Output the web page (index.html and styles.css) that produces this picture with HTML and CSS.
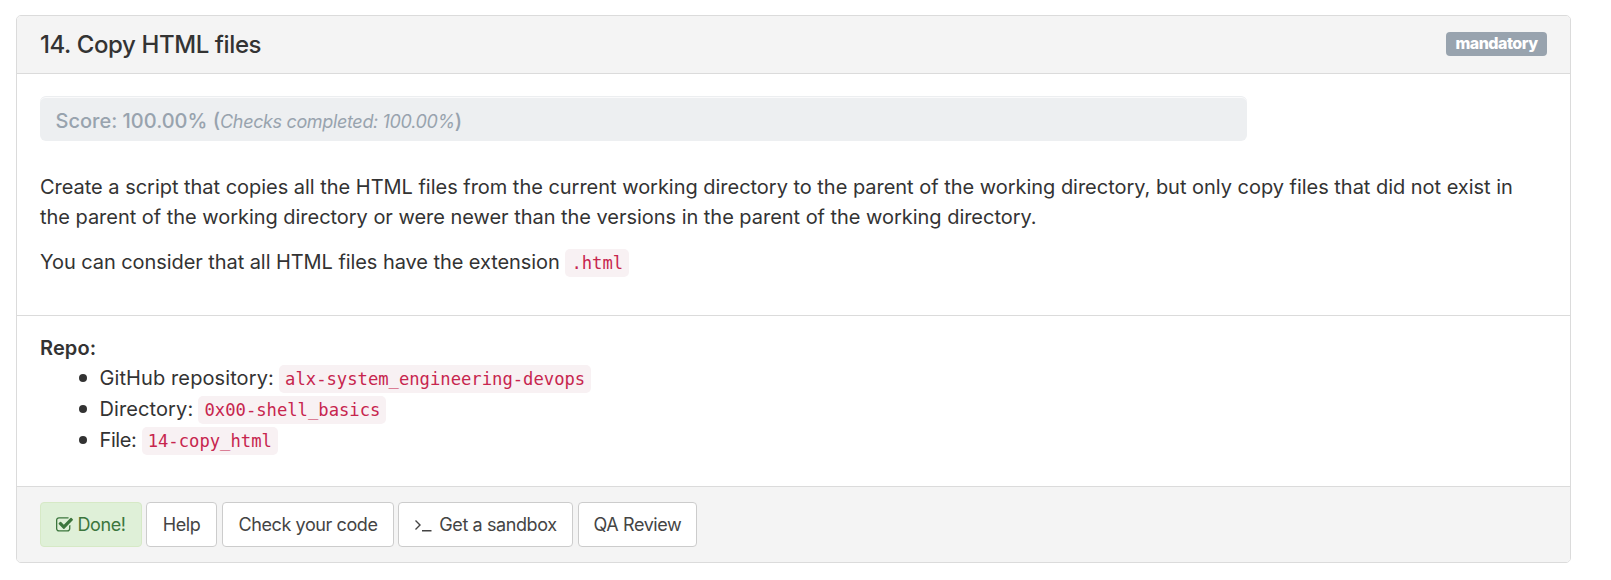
FILE: index.html
```html
<!DOCTYPE html>
<html lang="en">
<head>
<meta charset="utf-8">
<title>14. Copy HTML files</title>
<link rel="stylesheet" href="styles.css">
</head>
<body>
<section class="panel">
  <header class="panel-heading">
    <h3 class="panel-title">14. Copy HTML files</h3>
    <span class="label">mandatory</span>
  </header>
  <div class="panel-body">
    <div class="score"><span class="score-value">Score: 100.00% (</span><em class="checks">Checks completed: 100.00%</em>)</div>
    <p class="text"><span class="line-a">Create a script that copies all the HTML files from the current working directory to the parent of the working directory, but only copy files that did not exist in</span><br><span class="line-b">the parent of the working directory or were newer than the versions in the parent of the working directory.</span></p>
    <p class="text"><span class="line-c">You can consider that all HTML files have the extension</span> <code class="code">.html</code></p>
  </div>
  <div class="repo">
    <strong class="repo-title">Repo:</strong>
    <ul class="repo-list">
      <li class="repo-item"><span class="key-repo">GitHub repository:</span> <code class="code">alx-system_engineering-devops</code></li>
      <li class="repo-item"><span class="key-dir">Directory:</span> <code class="code">0x00-shell_basics</code></li>
      <li class="repo-item"><span class="key-file">File:</span> <code class="code">14-copy_html</code></li>
    </ul>
  </div>
  <footer class="panel-footer">
    <button class="btn btn-done"><svg class="icon-check" viewBox="0 0 1664 1536"><path fill="currentColor" d="M1408 802v318q0 119-84.500 203.500T1120 1408H288q-119 0-203.500-84.500T0 1120V288Q0 169 84.500 84.500T288 0h832q63 0 117 25 15 7 18 23 3 17-9 29l-49 49q-10 10-23 10-3 0-9-2-23-6-45-6H288q-66 0-113 47t-47 113v832q0 66 47 113t113 47h832q66 0 113-47t47-113V866q0-13 9-22l64-64q10-10 23-10 6 0 12 3 20 8 20 29zm231-489l-814 814q-24 24-57 24t-57-24L281 697q-24-24-24-57t24-57l110-110q24-24 57-24t57 24l263 263 647-647q24-24 57-24t57 24l110 110q24 24 24 57t-24 57z"/></svg><span>Done!</span></button>
    <button class="btn btn-help">Help</button>
    <button class="btn btn-check">Check your code</button>
    <button class="btn btn-sandbox"><svg class="icon-terminal" viewBox="0 0 18 14"><path d="M1.500 2.500 6 7 1.500 11.500M8 12.800h9.500" fill="none" stroke="currentColor" stroke-width="1.400"/></svg><span>Get a sandbox</span></button>
    <button class="btn btn-review">QA Review</button>
  </footer>
</section>
</body>
</html>
```
FILE: styles.css
```css
* { box-sizing: border-box; }
body {
  margin: 0;
  padding: 15px 40px 0 16px;
  background: #fff;
  color: #333;
  font: 20px/30px Inter, sans-serif;
}
.panel {
  width: 1555px;
  height: 548px;
  border: 1px solid #dbdbdb;
  border-radius: 5px;
  overflow: hidden;
}
.panel-heading {
  height: 58px;
  padding: 0 23px;
  display: flex;
  align-items: flex-start;
  justify-content: space-between;
  background: #f4f4f4;
  border-bottom: 1px solid #dbdbdb;
}
.panel-title {
  margin: 14px 0 0;
  font-size: 24px;
  line-height: 30px;
  font-weight: 450;
  letter-spacing: -0.4px;
  white-space: nowrap;
}
.label {
  width: 101px;
  height: 24px;
  margin-top: 16px;
  border-radius: 4px;
  background: #98a3ae;
  color: #fff;
  font-size: 16px;
  line-height: 22px;
  font-weight: 800;
  letter-spacing: -0.5px;
  text-align: center;
}
.panel-body {
  height: 242px;
  padding: 22px 23px 0;
  border-bottom: 1px solid #dbdbdb;
}
.score {
  width: 1207px;
  height: 45px;
  padding: 9px 15.5px 0;
  margin-bottom: 31px;
  border-radius: 6px;
  border-top: 1px solid #eceef0;
  background: #edeff1;
  box-shadow: inset 0 1px 0 #fafafb;
  color: #98a3ae;
  line-height: 30px;
  font-weight: 450;
  white-space: nowrap;
}
.score-value { letter-spacing: 0; }
.checks { font-size: 18px; font-weight: 400; letter-spacing: -0.35px; }
.text { margin: 0 0 15px; white-space: nowrap; }
.line-a { letter-spacing: -0.026px; }
.line-b { letter-spacing: -0.034px; }
.line-c { letter-spacing: -0.07px; }
.code {
  padding: 4px 6px;
  border-radius: 5px;
  background: #f8f1f3;
  color: #c7254e;
  font: 17.2px "DejaVu Sans Mono", monospace;
  letter-spacing: 0;
}
.repo { height: 170px; padding: 17px 23px 0; }
.repo-title { display: block; font-weight: 600; letter-spacing: 0.1px; }
.repo-list { margin: 0; padding-left: 39px; list-style: none; }
.repo-item { height: 31px; line-height: 31px; white-space: nowrap; letter-spacing: -0.4px; }
.repo-item::before {
  content: "";
  display: inline-block;
  width: 8px;
  height: 8px;
  margin-right: 12.5px;
  border-radius: 50%;
  background: #333;
  vertical-align: 3px;
}
.key-repo, .key-dir { letter-spacing: 0.1px; }
.panel-footer {
  height: 78px;
  padding: 15px 23px 0;
  display: flex;
  background: #f4f4f4;
  border-top: 1px solid #dbdbdb;
}
.btn {
  height: 45px;
  padding: 0;
  display: flex;
  align-items: center;
  justify-content: center;
  border: 1px solid #ccc;
  border-radius: 4px;
  background: #fff;
  color: #444;
  font: 18px/27px Inter, sans-serif;
  letter-spacing: -0.4px;
  white-space: nowrap;
}
.btn-done { width: 102px; margin-right: 4px; gap: 4px; color: #3c763d; background: #dff0d8; border-color: #d6e9c6; }
.btn-help { width: 71px; margin-right: 5px; }
.btn-check { width: 172px; margin-right: 4px; }
.btn-sandbox { width: 175px; margin-right: 5px; gap: 7px; }
.btn-review { width: 119px; }
.icon-check { width: 17px; height: 16px; }
.icon-terminal { width: 18px; height: 14px; }
```
